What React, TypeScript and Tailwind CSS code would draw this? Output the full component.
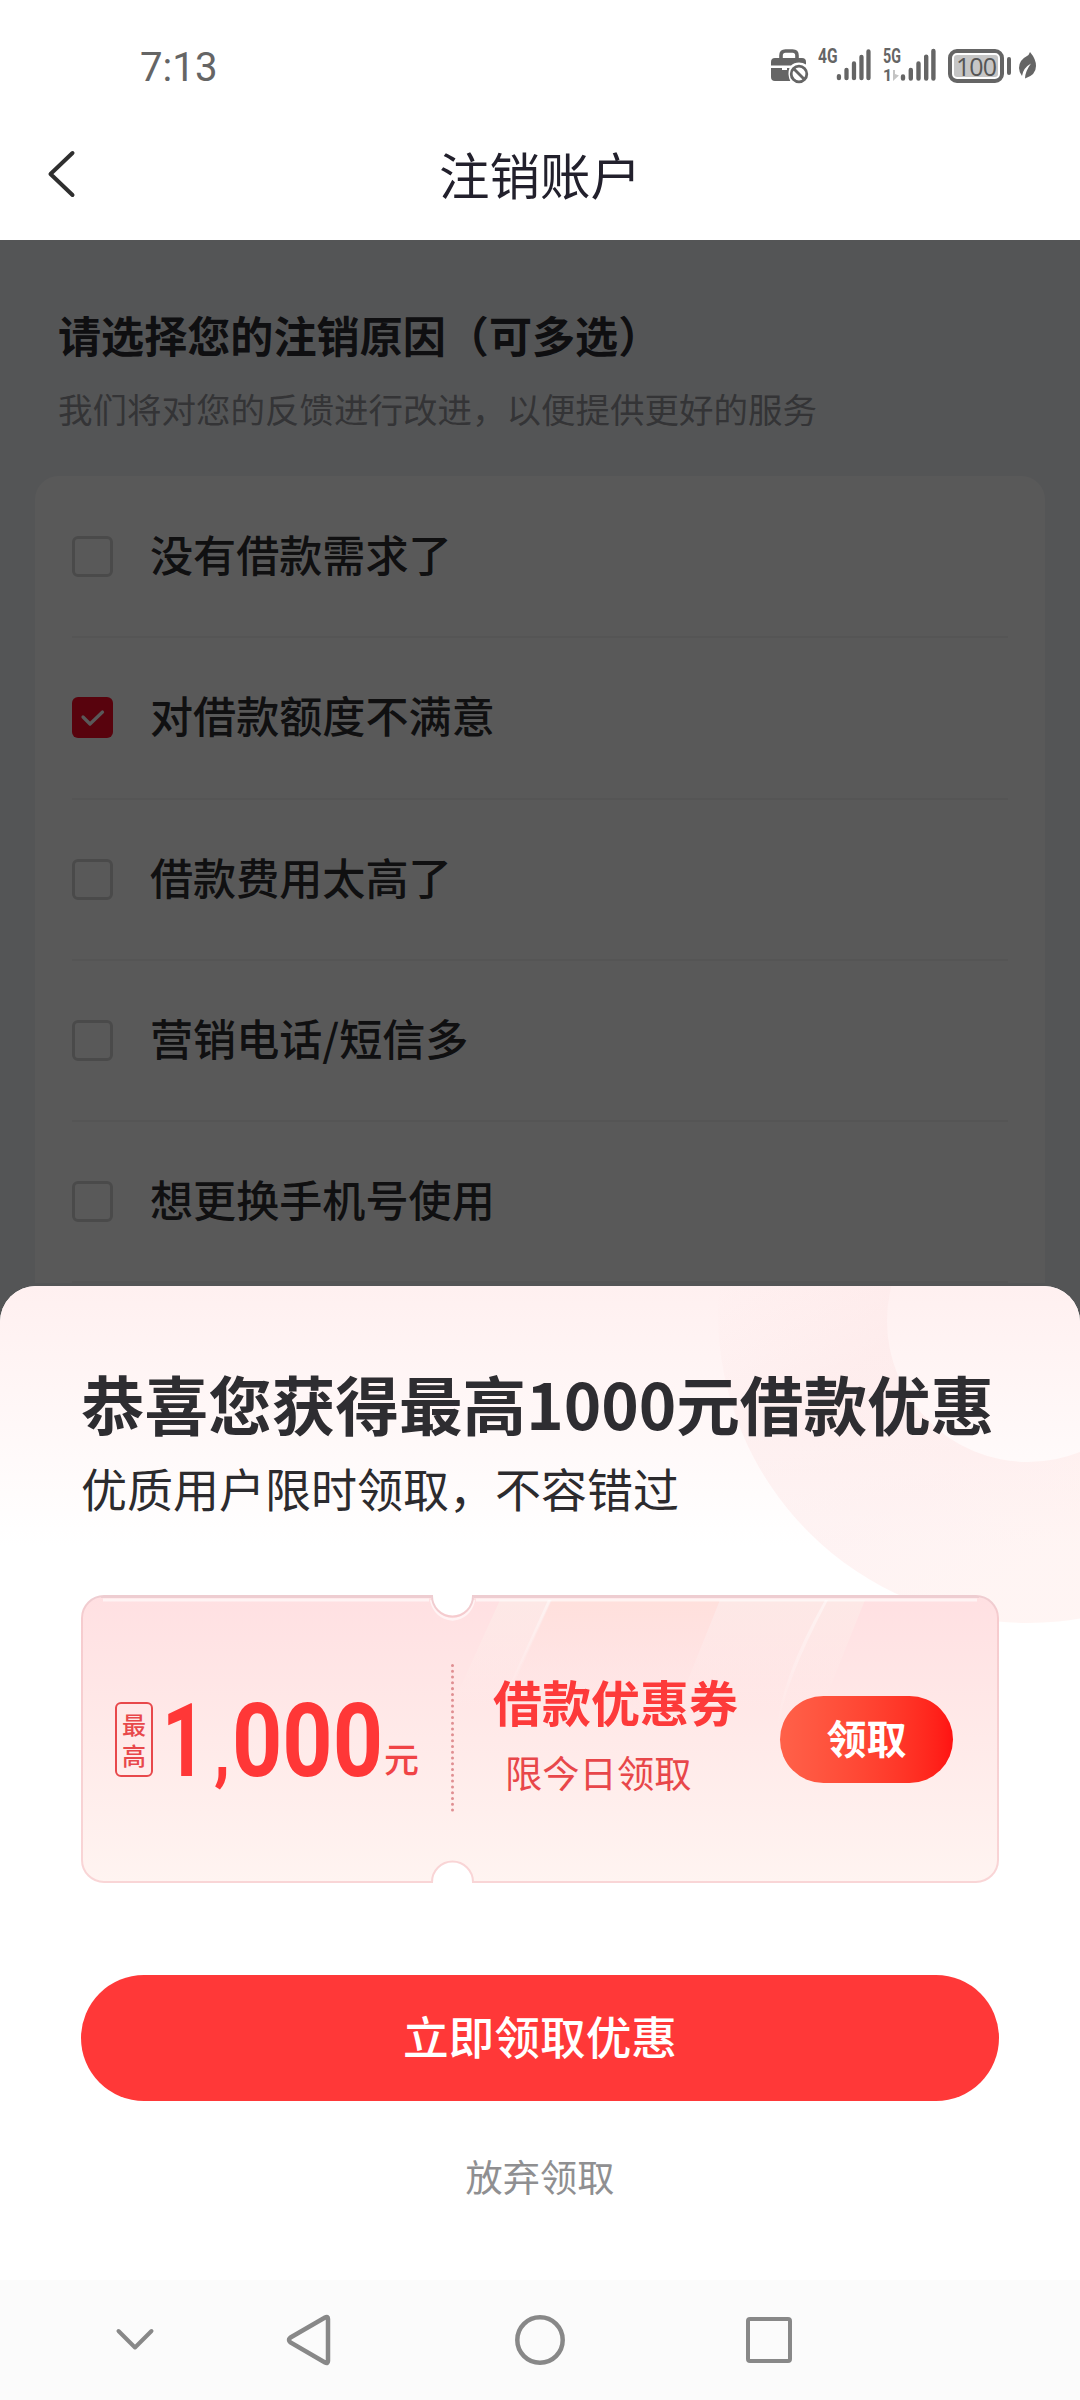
import { useState } from 'react';
import clsx from 'clsx';

const REASONS = [
  { id: 'no-need', label: '没有借款需求了' },
  { id: 'quota', label: '对借款额度不满意' },
  { id: 'fee', label: '借款费用太高了' },
  { id: 'marketing', label: '营销电话/短信多' },
  { id: 'phone', label: '想更换手机号使用' },
];

function SignalBars() {
  return (
    <svg width="36" height="34" viewBox="0 0 36 34" stroke="#656565" strokeWidth="4.4" strokeLinecap="round">
      <path d="M3 28.4v2.2M10.8 22v8.6M18.5 15.4v15.2M26.2 8.6v22M33.4 3v27.6" />
    </svg>
  );
}

function StatusBar() {
  return (
    <div className="flex h-[132px] items-start pl-[140px] pr-[43px] pt-[48px] text-[#656565]">
      <span className="w-[80px] origin-left scale-x-[0.98] font-[Roboto] text-[41px] leading-[38px]">7:13</span>
      <div className="ml-auto flex items-start">
        {/* work mode off */}
        <svg width="38" height="36" viewBox="0 0 38 36" fill="none">
          <path d="M10 11V7.500Q10 3 14.500 3h7Q26 3 26 7.500V11" stroke="#656565" strokeWidth="3.600" />
          <path d="M0 17.500V14q0-4 4-4h27q4 0 4 4v2.500q-3-2-7-2-5 0-8 3z" fill="#656565" />
          <path d="M0 20h11v2h5v-2h2.500q-2.500 6 .8 13H4q-4 0-4-4z" fill="#656565" />
          <circle cx="28" cy="26" r="7.800" stroke="#656565" strokeWidth="2.800" />
          <path d="M23 21l10 10" stroke="#656565" strokeWidth="2.800" />
        </svg>
        <div className="ml-[9px] flex w-[53px] justify-between">
          <span className="w-[18px] origin-top-left scale-x-[0.74] font-[Roboto] text-[21px] font-bold leading-[16px]">4G</span>
          <SignalBars />
        </div>
        <div className="ml-[12px] flex w-[53px] justify-between">
          <div className="w-[17px] font-[Roboto] font-bold">
            <div className="origin-top-left scale-x-[0.68] text-[21px] leading-[16px]">5G</div>
            <div className="flex items-center pt-[5px]">
              <span className="text-[16px] leading-[13px]">1</span>
              <svg className="ml-px" width="6" height="11" viewBox="0 0 6 11" fill="#c4c4c4">
                <path d="M0 0h2v4l4 1.500L0 11z" />
              </svg>
            </div>
          </div>
          <SignalBars />
        </div>
        <div className="ml-[12px] mt-px flex h-[34px] w-[56px] rounded-[9px] border-[4px] border-[#656565] p-[2px]">
          <span className="flex-1 rounded-[3px] bg-[#c6c6c6] text-center font-['Open_Sans'] text-[25px] leading-[22px] tracking-[-1px] text-[#555]">
            100
          </span>
        </div>
        <span className="ml-[3px] mt-[9px] h-[18px] w-[4px] rounded-full bg-[#656565]" />
        <svg className="ml-[7px] mt-[3px]" width="19" height="29" viewBox="0 0 19 29" fill="#656565">
          <path d="M12 1q6 7 6 14 0 9-11 12.500 0-7 6-15Q5 17 4 25 1 21 1 17 1 9 9 5q2-1 3-4z" />
        </svg>
      </div>
    </div>
  );
}

function NavHeader() {
  return (
    <div className="grid h-[108px] grid-cols-[200px_1fr_200px] items-start">
      <svg className="ml-[46px] mt-[17px]" width="32" height="50" viewBox="0 0 32 50" fill="none">
        <path d="M26.500 4L4.500 25l22 21" stroke="#2f2f2f" strokeWidth="4" strokeLinecap="round" strokeLinejoin="round" />
      </svg>
      <h1 className="mt-[16px] text-center text-[50.500px] leading-[50px] text-[#22202c]">注销账户</h1>
    </div>
  );
}

interface ReasonRowProps {
  label: string;
  checked: boolean;
  onToggle: () => void;
}

function ReasonRow({ label, checked, onToggle }: ReasonRowProps) {
  return (
    <button
      onClick={onToggle}
      className="flex h-[161.300px] w-full items-center border-b-2 border-[#f2f2f2] text-left"
    >
      <span
        className={clsx(
          'flex size-[41px] items-center justify-center rounded-[6px]',
          checked ? 'bg-[#fd0b26]' : 'border-[3px] border-[#d4d4d4]'
        )}
      >
        {checked && (
          <svg width="26" height="20" viewBox="0 0 26 20" fill="none">
            <path d="M3 9l7 7L22.500 4" stroke="#fff" strokeWidth="3.200" strokeLinecap="round" strokeLinejoin="round" />
          </svg>
        )}
      </span>
      <span className="ml-[37px] pb-[7px] text-[43.100px] font-medium leading-[44px] text-[#303033]">{label}</span>
    </button>
  );
}

function Coupon() {
  return (
    <div className="relative h-[288px] w-[918px]">
      <svg className="absolute inset-0" width="918" height="288" viewBox="0 0 918 288" fill="none">
        <defs>
          <linearGradient id="couponFill" x1="0" y1="0" x2="0" y2="1">
            <stop offset="0" stopColor="#ffe0e2" />
            <stop offset="0.500" stopColor="#ffeae9" />
            <stop offset="1" stopColor="#fff4f1" />
          </linearGradient>
          <linearGradient id="peachBand" x1="0" y1="0" x2="0" y2="1">
            <stop offset="0" stopColor="#ffe0dc" />
            <stop offset="1" stopColor="#ffe6e6" stopOpacity="0" />
          </linearGradient>
          <linearGradient id="lightBand" x1="0" y1="0" x2="0" y2="1">
            <stop offset="0" stopColor="#fde8e6" />
            <stop offset="1" stopColor="#ffeceb" stopOpacity="0" />
          </linearGradient>
          <linearGradient id="shine" x1="0" y1="0" x2="0" y2="1">
            <stop offset="0" stopColor="#fff" stopOpacity="0.450" />
            <stop offset="1" stopColor="#fff" stopOpacity="0" />
          </linearGradient>
          <linearGradient id="couponEdge" x1="0" y1="0" x2="0" y2="1">
            <stop offset="0" stopColor="#eecdd1" />
            <stop offset="0.080" stopColor="#f6cbce" />
            <stop offset="1" stopColor="#f9d5d6" />
          </linearGradient>
          <clipPath id="couponClip">
            <path d="M23 1H351a20.500 20.500 0 0 0 41 0H895a22 22 0 0 1 22 22V265a22 22 0 0 1-22 22H392a20.500 20.500 0 0 0-41 0H23a22 22 0 0 1-22-22V23A22 22 0 0 1 23 1z" />
          </clipPath>
        </defs>
        <g clipPath="url(#couponClip)">
          <path d="M0 0h918v288H0z" fill="url(#couponFill)" />
          <path d="M419 5h52l-50 110h-52z" fill="url(#lightBand)" />
          <path d="M471 5h168l-44 110H421z" fill="url(#peachBand)" />
          <path d="M639 5h145l-44 110H595z" fill="url(#lightBand)" />
          <path d="M467 5h3l-44 95h-2z" fill="url(#shine)" />
          <path d="M744 5h3q-45 85-50 130h-1q3-50 48-130z" fill="url(#shine)" />
          <path d="M22 5H348M395 5H896" stroke="#fff" strokeOpacity="0.600" strokeWidth="3" />
          <path d="M350 5q4 17.500 21.500 19.500Q389 22.500 393 5" stroke="#fff" strokeOpacity="0.600" strokeWidth="2.500" />
        </g>
        <path
          d="M23 1H351a20.500 20.500 0 0 0 41 0H895a22 22 0 0 1 22 22V265a22 22 0 0 1-22 22H392a20.500 20.500 0 0 0-41 0H23a22 22 0 0 1-22-22V23A22 22 0 0 1 23 1z"
          stroke="url(#couponEdge)"
          strokeWidth="2"
        />
        <path d="M20 2H350M393 2H898" stroke="#eecdd1" strokeWidth="2" />
        <path d="M371.500 70.500V217" stroke="#e08f92" strokeWidth="3" strokeDasharray="0.010 5.770" strokeLinecap="round" />
      </svg>

      <div className="relative flex h-full">
        <div className="flex w-[371px] items-start pl-[34px] pt-[107px]">
          <div className="flex h-[75px] w-[38px] shrink-0 flex-col items-center rounded-[6px] border-[2.500px] border-[#e8484b] pt-[4px] text-[24px] font-medium leading-[31px] text-[#e8484b]">
            <span>最</span>
            <span>高</span>
          </div>
          <div className="ml-[9px] flex h-[75px] font-[Roboto] text-[102px] font-bold leading-[78px] text-[#ff3737]">
            <span className="w-[52px] origin-top-left scale-x-[0.75]">1</span>
            <span className="mt-[9px] w-[18px] origin-top-left scale-x-[0.850] text-[76px]">,</span>
            <span className="w-[152px] origin-top-left scale-x-[0.86]">000</span>
          </div>
          <span className="mt-[38px] text-[35px] font-medium leading-[35px] text-[#f04446]">元</span>
        </div>
        <div className="pl-[41px] pt-[81px]">
          <div className="text-[49px] font-bold leading-[50px] text-[#fd3a3a]">借款优惠券</div>
          <div className="ml-[12px] mt-[27px] text-[37.300px] leading-[38px] text-[#e8474a]">限今日领取</div>
        </div>
        <button className="ml-auto mr-[46px] mt-[101px] flex h-[87px] w-[173px] items-center justify-center rounded-full bg-linear-to-r from-[#ff6149] to-[#ff1212] pb-[6px] text-[40px] font-bold text-white">
          领取
        </button>
      </div>
    </div>
  );
}

function OfferSheet() {
  return (
    <div className="relative h-[994px] overflow-hidden rounded-t-[36px] bg-white">
      <div className="absolute inset-x-0 top-0 h-[260px] bg-linear-to-b from-[#fff0f0] to-white" />
      {/* decorative ring in the corner */}
      <svg className="absolute right-0 top-0" width="380" height="340" viewBox="0 0 380 340">
        <defs>
          <linearGradient id="ring" gradientUnits="userSpaceOnUse" x1="20" y1="0" x2="230" y2="340">
            <stop offset="0" stopColor="#fbdcdc" stopOpacity="0" />
            <stop offset="0.350" stopColor="#fbdcdc" stopOpacity="0.300" />
            <stop offset="0.700" stopColor="#fddede" stopOpacity="0.360" />
            <stop offset="1" stopColor="#ffe2de" stopOpacity="0.350" />
          </linearGradient>
        </defs>
        <path
          fillRule="evenodd"
          fill="url(#ring)"
          d="M18 27a310 310 0 0 0 620 0 310 310 0 0 0-620 0zM187 35a141 141 0 0 0 282 0 141 141 0 0 0-282 0z"
        />
      </svg>
      <div className="relative flex flex-col pl-[81px] pt-[84px]">
        <h2 className="whitespace-nowrap text-[63.600px] font-bold leading-[64px] text-[#2e2d31]">恭喜您获得最高1000元借款优惠</h2>
        <p className="mt-[30px] text-[46px] leading-[46px] text-[#2c2b2e]">优质用户限时领取，不容错过</p>
        <div className="mt-[85px]">
          <Coupon />
        </div>
        <button className="mt-[92px] flex h-[126px] w-[918px] items-center justify-center rounded-full bg-[#ff3838] pb-[6px] text-[45.700px] font-medium text-white">
          立即领取优惠
        </button>
        <button className="mt-[56px] w-[918px] text-center text-[37.200px] leading-[38px] text-[#8f8f91]">放弃领取</button>
      </div>
    </div>
  );
}

function SystemNav() {
  return (
    <div className="flex h-[120px] items-center bg-[#fbfbfb]">
      <svg className="ml-[114px]" width="42" height="28" viewBox="0 0 42 28" fill="none">
        <path d="M4.500 5L21 21.500 37.500 5" stroke="#888" strokeWidth="4" strokeLinecap="round" strokeLinejoin="round" />
      </svg>
      <svg className="ml-[130px]" width="46" height="54" viewBox="0 0 46 54" fill="none">
        <path d="M4.500 24.500L39 4.500q3-1.500 3 1.500v42q0 3-3 1.500L4.500 29.500q-3-2.500 0-5z" stroke="#888" strokeWidth="4.500" />
      </svg>
      <svg className="ml-[181px]" width="54" height="54" viewBox="0 0 54 54" fill="none">
        <circle cx="27" cy="27" r="22.700" stroke="#888" strokeWidth="4.500" />
      </svg>
      <span className="ml-[179px] size-[46px] rounded-[4px] border-[4px] border-[#888]" />
    </div>
  );
}

export default function App() {
  const [selected, setSelected] = useState<string[]>(['quota']);

  const toggle = (id: string) => {
    setSelected((prev) => (prev.includes(id) ? prev.filter((x) => x !== id) : [...prev, id]));
  };

  return (
    <div
      lang="zh-CN"
      className="flex h-[2400px] w-[1080px] flex-col overflow-hidden bg-white font-['Noto_Sans_CJK_SC',sans-serif]"
    >
      <StatusBar />
      <NavHeader />
      <div className="relative h-[1082px] shrink-0 bg-[#f1f4f7] px-[35px]">
        <div className="h-[236px] pl-[23px] pt-[72px]">
          <h2 className="text-[43.100px] font-bold leading-[44px] text-[#2c2c31]">请选择您的注销原因（可多选）</h2>
          <p className="mt-[35px] text-[34.500px] leading-[35px] text-[#94959a]">我们将对您的反馈进行改进，以便提供更好的服务</p>
        </div>
        <div className="rounded-t-[24px] bg-white px-[37px] pt-px">
          {REASONS.map((reason) => (
            <ReasonRow
              key={reason.id}
              label={reason.label}
              checked={selected.includes(reason.id)}
              onToggle={() => toggle(reason.id)}
            />
          ))}
        </div>
        <div className="pointer-events-none absolute inset-0 bg-black/65" />
      </div>
      {/* sheet overlaps the dimmed page so its rounded corners sit on the backdrop */}
      <div className="-mt-[36px]">
        <OfferSheet />
      </div>
      <SystemNav />
    </div>
  );
}
